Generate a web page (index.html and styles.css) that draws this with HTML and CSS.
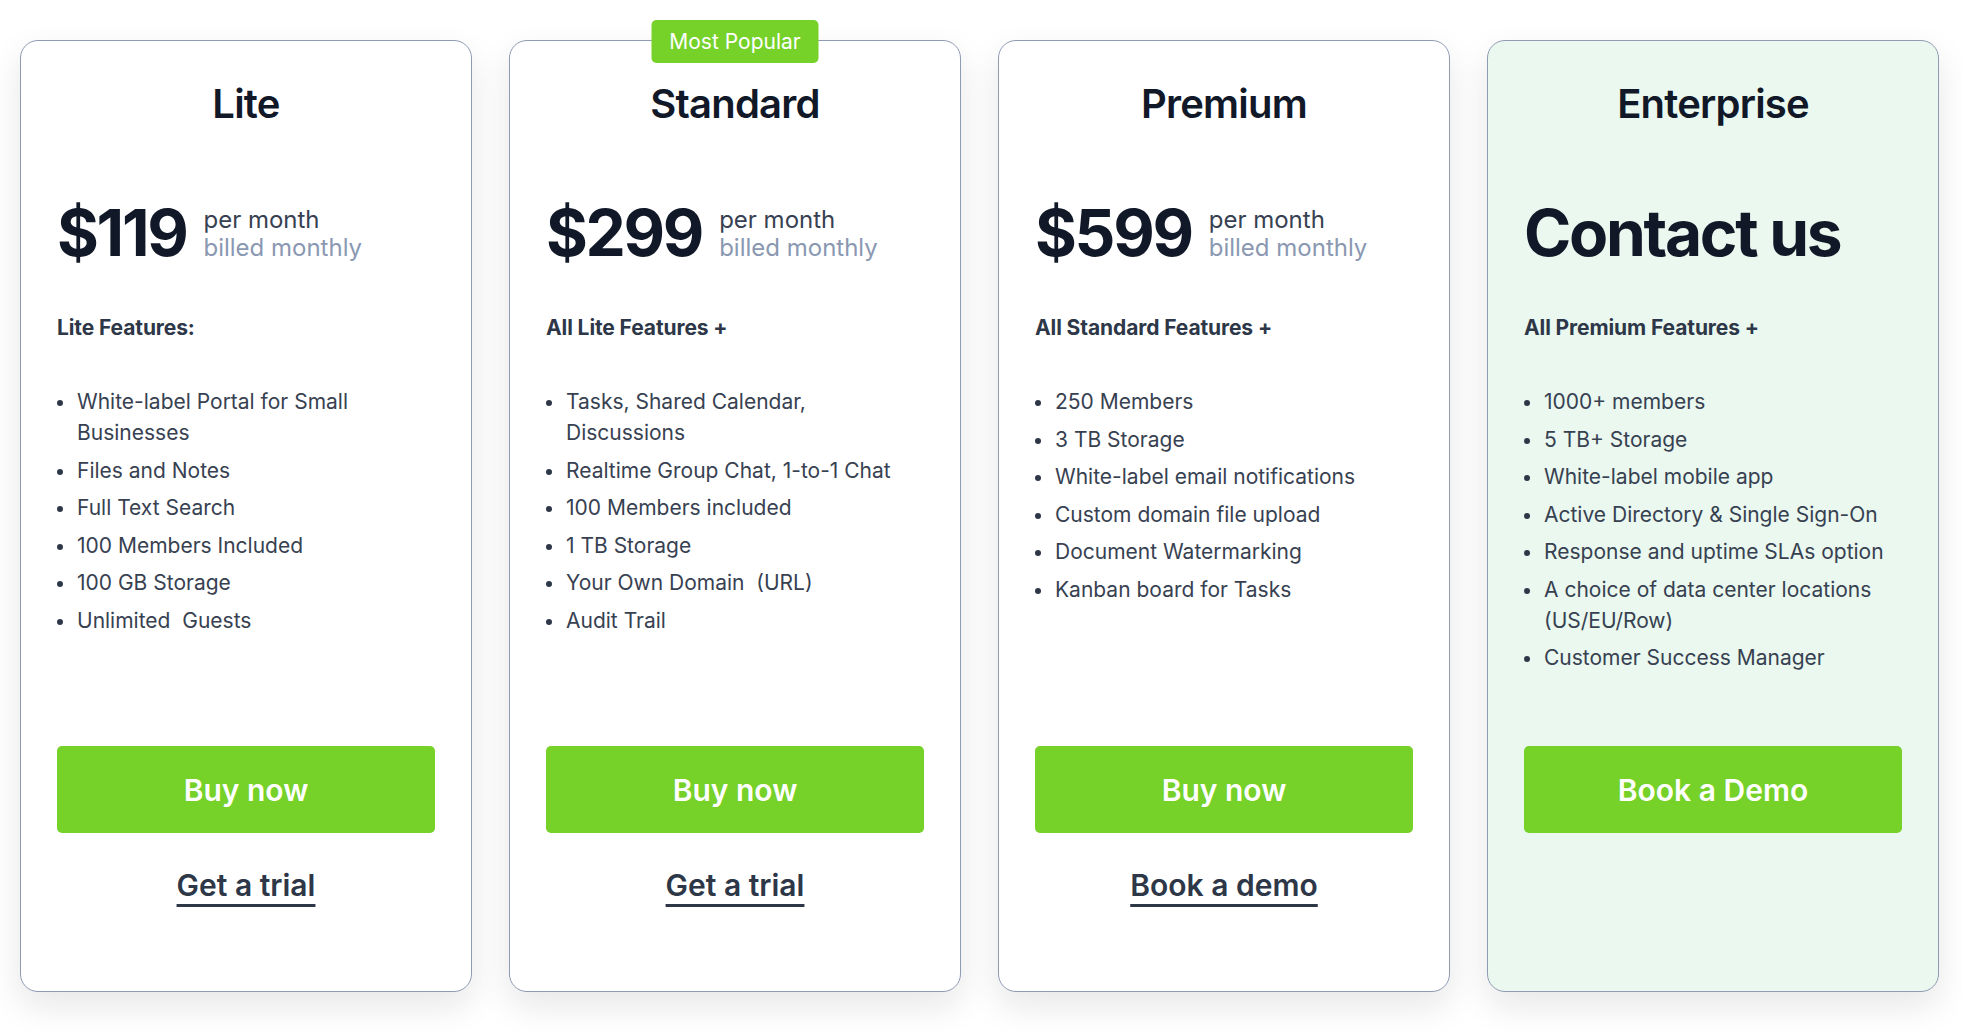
FILE: index.html
```html
<!DOCTYPE html>
<html lang="en">
<head>
<meta charset="utf-8">
<title>Pricing</title>
<link rel="stylesheet" href="styles.css">
</head>
<body>
<main class="plans">
  <section class="card">
    <h2 class="card-title">Lite</h2>
    <div class="price-row">
      <span class="price">$119</span>
      <span class="period"><span class="per">per month</span><span class="billed">billed monthly</span></span>
    </div>
    <h3 class="features-title">Lite Features:</h3>
    <ul class="features">
      <li>White-label Portal for Small Businesses</li>
      <li>Files and Notes</li>
      <li>Full Text Search</li>
      <li>100 Members Included</li>
      <li>100 GB Storage</li>
      <li>Unlimited&nbsp; Guests</li>
    </ul>
    <div class="card-footer">
      <a class="btn" href="#">Buy now</a>
      <a class="link" href="#">Get a trial</a>
    </div>
  </section>

  <section class="card">
    <span class="badge">Most Popular</span>
    <h2 class="card-title">Standard</h2>
    <div class="price-row">
      <span class="price">$299</span>
      <span class="period"><span class="per">per month</span><span class="billed">billed monthly</span></span>
    </div>
    <h3 class="features-title">All Lite Features +</h3>
    <ul class="features">
      <li>Tasks, Shared Calendar, Discussions</li>
      <li>Realtime Group Chat, 1-to-1 Chat</li>
      <li>100 Members included</li>
      <li>1 TB Storage</li>
      <li>Your Own Domain&nbsp; (URL)</li>
      <li>Audit Trail</li>
    </ul>
    <div class="card-footer">
      <a class="btn" href="#">Buy now</a>
      <a class="link" href="#">Get a trial</a>
    </div>
  </section>

  <section class="card">
    <h2 class="card-title">Premium</h2>
    <div class="price-row">
      <span class="price">$599</span>
      <span class="period"><span class="per">per month</span><span class="billed">billed monthly</span></span>
    </div>
    <h3 class="features-title">All Standard Features +</h3>
    <ul class="features">
      <li>250 Members</li>
      <li>3 TB Storage</li>
      <li>White-label email notifications</li>
      <li>Custom domain file upload</li>
      <li>Document Watermarking</li>
      <li>Kanban board for Tasks</li>
    </ul>
    <div class="card-footer">
      <a class="btn" href="#">Buy now</a>
      <a class="link" href="#">Book a demo</a>
    </div>
  </section>

  <section class="card card-enterprise">
    <h2 class="card-title">Enterprise</h2>
    <div class="price-row">
      <span class="price">Contact us</span>
    </div>
    <h3 class="features-title">All Premium Features +</h3>
    <ul class="features">
      <li>1000+ members</li>
      <li>5 TB+ Storage</li>
      <li>White-label mobile app</li>
      <li>Active Directory &amp; Single Sign-On</li>
      <li>Response and uptime SLAs option</li>
      <li>A choice of data center locations (US/EU/Row)</li>
      <li>Customer Success Manager</li>
    </ul>
    <div class="card-footer">
      <a class="btn" href="#">Book a Demo</a>
    </div>
  </section>
</main>
</body>
</html>
```

FILE: styles.css
```css
* { box-sizing: border-box; }

html, body {
  margin: 0;
  padding: 0;
  background: #ffffff;
}

body {
  font-family: Inter, "Noto Sans", "Liberation Sans", sans-serif;
  color: #111827;
}

.plans {
  display: flex;
  gap: 37px;
  padding: 40px 23px 40px 20px;
}

.card {
  position: relative;
  width: 452px;
  height: 952px;
  flex: 0 0 452px;
  display: flex;
  flex-direction: column;
  border: 1px solid #8f9bb3;
  border-radius: 18px;
  background: #ffffff;
  box-shadow: 0 14px 34px rgba(15, 23, 42, 0.1);
  padding: 39px 36px 0 36px;
}

.card-enterprise {
  background: #eaf8ef;
}

.badge {
  position: absolute;
  top: -21px;
  left: 50%;
  transform: translateX(-50%);
  width: 167px;
  height: 43px;
  display: flex;
  align-items: center;
  justify-content: center;
  background: #76d128;
  color: #ffffff;
  font-size: 21px;
  font-weight: 400;
  border-radius: 5px;
  white-space: nowrap;
}

.card-title {
  margin: 0;
  text-align: center;
  font-size: 40px;
  line-height: 48px;
  font-weight: 600;
  letter-spacing: -0.02em;
  color: #111827;
}

.price-row {
  margin-top: 73px;
  display: flex;
  align-items: last baseline;
  gap: 17px;
  height: 64px;
}

.price {
  font-size: 64px;
  line-height: 64px;
  font-weight: 700;
  letter-spacing: -0.036em;
  color: #111827;
  white-space: nowrap;
}

.period {
  display: flex;
  flex-direction: column;
  font-size: 24px;
  line-height: 28px;
}

.per { color: #374151; }
.billed { color: #8a98b2; }

.features-title {
  margin: 51px 0 0 0;
  font-size: 21px;
  line-height: 24px;
  font-weight: 700;
  letter-spacing: -0.005em;
  color: #2d3748;
}

.features {
  list-style: none;
  margin: 46px 0 0 0;
  padding: 0;
  flex: 1;
}

.features li {
  position: relative;
  padding-left: 20px;
  font-size: 21px;
  line-height: 31px;
  color: #374151;
  margin-bottom: 6.5px;
}

.features li::before {
  content: "";
  position: absolute;
  left: 0;
  top: 14px;
  width: 6px;
  height: 6px;
  border-radius: 50%;
  background: #2d3748;
}

.card-footer {
  display: flex;
  flex-direction: column;
  align-items: center;
  height: 245px;
  padding-bottom: 88px;
}

.btn {
  display: flex;
  align-items: center;
  justify-content: center;
  width: 100%;
  height: 87px;
  background: #76d128;
  color: #ffffff;
  border-radius: 5px;
  font-size: 30px;
  font-weight: 600;
  text-decoration: none;
}

.link {
  margin-top: 34px;
  font-size: 30px;
  line-height: 36px;
  font-weight: 600;
  color: #2d3748;
  text-decoration: underline;
  text-decoration-thickness: 3px;
  text-underline-offset: 8px;
}
```
